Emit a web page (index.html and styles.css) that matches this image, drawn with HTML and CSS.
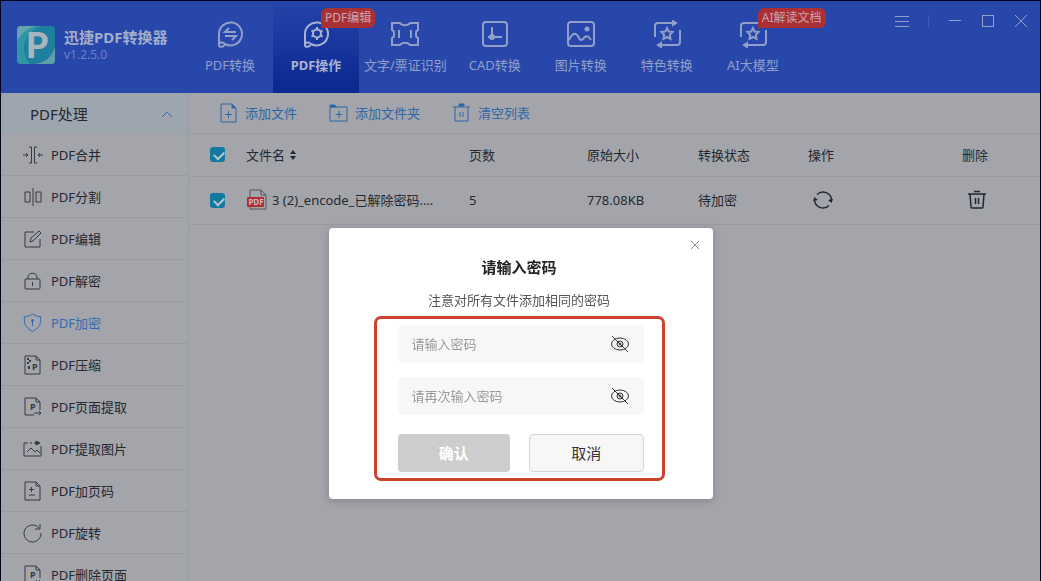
FILE: index.html
```html
<!DOCTYPE html>
<html lang="zh-CN">
<head>
    <meta charset="UTF-8">
    <meta name="viewport" content="width=device-width, initial-scale=1.0">
    <title>迅捷PDF转换器</title>
    <link rel="stylesheet" href="styles.css">
</head>
<body>
    <div class="app">
        <header class="header">
            <div class="brand">
                <svg class="logo" viewBox="0 0 38 38">
                    <rect width="38" height="38" rx="4" fill="#1f7f9e"/>
                    <path d="M0 17V4a4 4 0 0 1 4-4h16C11 2 3 8 0 17z" fill="#65a3ad"/>
                    <path d="M38 21v13a4 4 0 0 1-4 4H17c11-1 18-7 21-17z" fill="#5f9fac"/>
                    <path d="M0 17C3 8 11 2 20 0h3C13 5 7 13 7 22c0 6 2 12 6 16H4a4 4 0 0 1-4-4z" fill="#2f96a6"/>
                    <text class="logo-letter" x="20" y="32" text-anchor="middle">P</text>
                </svg>
                <div>
                    <div class="brand-name">迅捷PDF转换器</div>
                    <div class="version">v1.2.5.0</div>
                </div>
            </div>
            <nav class="nav">
                <a href="#">
                    <svg class="nav-icon" viewBox="0 0 28 28"><path d="M3 25V14a11.500 11.500 0 1 1 6 10c-1 3-6 4-6 1 0-3 3-3 5-2"/><path d="M20 12H9l4-4M9 16h11l-4 4"/></svg>
                    <span>PDF转换</span>
                </a>
                <a href="#" class="active">
                    <svg class="nav-icon" viewBox="0 0 28 28"><path d="M3 25V14a11.500 11.500 0 1 1 6 10c-1 3-6 4-6 1 0-3 3-3 5-2"/><circle cx="15" cy="13.500" r="4"/><path d="M15 7v3M15 17v3M9.400 10.300l2 1.200M18.600 15.500l2 1.200M9.400 16.700l2-1.200M18.600 11.500l2-1.200"/></svg>
                    <span>PDF操作</span>
                    <em class="badge">PDF编辑</em>
                </a>
                <a href="#">
                    <svg class="nav-icon" viewBox="0 0 28 28"><path d="M1 3h8c2 3 8 3 10 0h8v7c-2 1-2 1-2 4s0 3 2 4v7h-8c-2-3-8-3-10 0H1v-7c2-1 2-1 2-4s0-3-2-4zM8 10v8M20 10v8"/></svg>
                    <span>文字/票证识别</span>
                </a>
                <a href="#">
                    <svg class="nav-icon" viewBox="0 0 28 28"><rect x="2" y="2" width="24" height="24" rx="3"/><path d="M11 7v13M7 17h14"/><circle cx="11" cy="17" r="2" fill="currentColor"/></svg>
                    <span>CAD转换</span>
                </a>
                <a href="#">
                    <svg class="nav-icon" viewBox="0 0 28 28"><rect x="1" y="2" width="26" height="24" rx="3"/><circle cx="20" cy="9" r="1.500" fill="currentColor"/><path d="M2 20c4-8 7-8 10-2 2 4 4 1 6-1s4 0 6 3"/></svg>
                    <span>图片转换</span>
                </a>
                <a href="#">
                    <svg class="nav-icon" viewBox="0 0 28 28"><path d="M2 17V6a3 3 0 0 1 3-3h17M27 10v12a3 3 0 0 1-3 3H7"/><path d="M20 1l3 2-3 2zM8 23l-3 2 3 2z" fill="currentColor"/><path d="M14 8l1.700 3.600 3.900.5-2.800 2.800.7 4-3.500-1.900-3.500 1.900.7-4-2.800-2.800 3.900-.5z"/></svg>
                    <span>特色转换</span>
                </a>
                <a href="#">
                    <svg class="nav-icon" viewBox="0 0 28 28"><path d="M2 17V6a3 3 0 0 1 3-3h17M27 10v12a3 3 0 0 1-3 3H7"/><path d="M20 1l3 2-3 2zM8 23l-3 2 3 2z" fill="currentColor"/><path d="M14 8l1.700 3.600 3.900.5-2.800 2.800.7 4-3.500-1.900-3.500 1.900.7-4-2.800-2.800 3.900-.5z"/></svg>
                    <span>AI大模型</span>
                    <em class="badge">AI解读文档</em>
                </a>
            </nav>
            <div class="window-buttons">
                <button aria-label="菜单"><svg viewBox="0 0 14 14"><path d="M0 2.500h14M0 7.500h14M0 12.500h14"/></svg></button>
                <span class="separator"></span>
                <button aria-label="最小化"><svg viewBox="0 0 14 14"><path d="M1 6.500h12"/></svg></button>
                <button aria-label="最大化"><svg viewBox="0 0 14 14"><rect x="1.500" y="1.500" width="11" height="11"/></svg></button>
                <button aria-label="关闭"><svg viewBox="0 0 14 14"><path d="M1 1l12 12M13 1L1 13"/></svg></button>
            </div>
        </header>

        <div class="content">
            <aside class="sidebar">
                <button class="sidebar-title">
                    <span>PDF处理</span>
                    <svg class="arrow" viewBox="0 0 12 12"><path d="M1 9l5-5 5 5"/></svg>
                </button>
                <ul class="menu">
                    <li><a href="#"><svg class="icon" viewBox="0 0 20 20"><path d="M6 2h2.500v16H6M14 2h-2.500v16H14M0 10h5M3 8l2 2-2 2M20 10h-5M17 8l-2 2 2 2"/></svg>PDF合并</a></li>
                    <li><a href="#"><svg class="icon" viewBox="0 0 20 20"><path d="M10 1v18M2 5h5v10H2zM13 5h5v10h-5z"/></svg>PDF分割</a></li>
                    <li><a href="#"><svg class="icon" viewBox="0 0 20 20"><path d="M11 3H2v15h15v-8M7 13l1-4 8-7 2 2-8 8z"/></svg>PDF编辑</a></li>
                    <li><a href="#"><svg class="icon" viewBox="0 0 20 20"><rect x="2" y="8" width="15" height="10" rx="1"/><path d="M5 8V6c0-5 9-5 9 0v2M9.500 11v4"/></svg>PDF解密</a></li>
                    <li><a href="#" class="current"><svg class="icon" viewBox="0 0 20 20"><path d="M9.500 1c3 2 5 2.500 8 2.500 1 7-1 11-8 15-7-4-9-8-8-15 3 0 5-.5 8-2.500z"/><path d="M9.500 8v5"/><circle cx="9.500" cy="7.500" r="1" fill="currentColor"/></svg>PDF加密</a></li>
                    <li><a href="#"><svg class="icon" viewBox="0 0 20 20"><path d="M2 1h11l4 4v14H2zM13 1v4h4"/><path d="M4 3h2v2H4zM6 5h2v2H6zM4 7h2v2H4zM5 11h2v3H5z" fill="currentColor" stroke="none"/><text x="9" y="15">P</text></svg>PDF压缩</a></li>
                    <li><a href="#"><svg class="icon" viewBox="0 0 20 20"><path d="M11 18H2V1h11l4 4v8M13 1v4h4M11 16h7M16 14l2 2-2 2"/><text x="7" y="13">P</text></svg>PDF页面提取</a></li>
                    <li><a href="#"><svg class="icon" viewBox="0 0 20 20"><path d="M5 4H1v13h17V7M7 4h2M11 4h4M4 13l4-4 4 4 2-2 3 3"/><path d="M13 2l4 2-4 2z" fill="currentColor"/></svg>PDF提取图片</a></li>
                    <li><a href="#"><svg class="icon" viewBox="0 0 20 20"><path d="M2 1h11l4 4v14H2zM13 1v4h4M8.500 6v5M6 8.500h5M6 14h6"/></svg>PDF加页码</a></li>
                    <li><a href="#"><svg class="icon" viewBox="0 0 20 20"><path d="M16 5a8.500 8.500 0 1 0 2 5M17 1v5h-5"/></svg>PDF旋转</a></li>
                    <li><a href="#"><svg class="icon" viewBox="0 0 20 20"><path d="M11 18H2V1h11l4 4v8M13 1v4h4M13 15l4 4M17 15l-4 4"/><text x="7" y="13">P</text></svg>PDF删除页面</a></li>
                </ul>
            </aside>

            <main class="main">
                <div class="toolbar">
                    <button><svg class="icon" viewBox="0 0 20 20"><path d="M2 1h11l4 4v14H2zM9.500 8v7M6 11.500h7"/><path d="M13 1v4h4z" fill="currentColor"/></svg>添加文件</button>
                    <button><svg class="icon" viewBox="0 0 20 20"><path d="M1 18V4h17v14zM10 8v7M6.500 11.500h7"/><path d="M1 2h5l1 2H1z" fill="currentColor"/></svg>添加文件夹</button>
                    <button><svg class="icon" viewBox="0 0 20 20"><path d="M1 4h17M3 4v14h13V4M8 9v5M11 9v5"/><path d="M7 1h5v2H7z" fill="currentColor"/></svg>清空列表</button>
                </div>
                <table class="file-table">
                    <colgroup>
                        <col class="col-check">
                        <col>
                        <col class="col-pages">
                        <col class="col-size">
                        <col class="col-status">
                        <col class="col-action">
                        <col class="col-delete">
                    </colgroup>
                    <thead>
                        <tr>
                            <th><input type="checkbox" aria-label="全选" checked></th>
                            <th>文件名 <svg class="sort" viewBox="0 0 6 10"><path d="M3 0l3 4H0zM3 10l3-4H0z"/></svg></th>
                            <th>页数</th>
                            <th>原始大小</th>
                            <th>转换状态</th>
                            <th>操作</th>
                            <th>删除</th>
                        </tr>
                    </thead>
                    <tbody>
                        <tr>
                            <td><input type="checkbox" aria-label="选择文件" checked></td>
                            <td>
                                <div class="file-name">
                                    <svg class="file-icon" viewBox="0 0 22 22"><path d="M4 1h11l5 5v14H4zM15 1v5h5" fill="none" stroke="#54565e"/><rect x="1" y="8" width="17" height="10" rx="1" fill="#b02d35" stroke="none"/><text x="10" y="16" text-anchor="middle">PDF</text></svg>
                                    3 (2)_encode_已解除密码....
                                </div>
                            </td>
                            <td>5</td>
                            <td>778.08KB</td>
                            <td>待加密</td>
                            <td><button class="icon-button" aria-label="转换"><svg class="icon" viewBox="0 0 20 20"><path d="M4 4.500A8.500 8.500 0 0 1 18.500 10.500M16 15.500A8.500 8.500 0 0 1 1.500 9.500"/><path d="M0 11l1.500-4 3.500 3zM20 9l-1.500 4-3.500-3z" fill="currentColor" stroke="none"/></svg></button></td>
                            <td><button class="icon-button" aria-label="删除"><svg class="icon" viewBox="0 0 20 20"><path d="M1 4h18M7 1.500h6M3 4l1 13q0 1 1 1h10q1 0 1-1l1-13M8.500 8v6M11.500 8v6"/></svg></button></td>
                        </tr>
                    </tbody>
                </table>
            </main>
        </div>
    </div>

    <div class="overlay">
        <div class="dialog" role="dialog" aria-labelledby="dialog-title">
            <button class="close" aria-label="关闭"><svg viewBox="0 0 10 10"><path d="M1 1l8 8M9 1L1 9"/></svg></button>
            <h2 id="dialog-title">请输入密码</h2>
            <p>注意对所有文件添加相同的密码</p>
            <form class="password-form">
                <div class="field">
                    <input type="password" placeholder="请输入密码" aria-label="请输入密码">
                    <button type="button" class="eye" aria-label="显示密码"><svg viewBox="0 0 20 18"><ellipse cx="10" cy="9" rx="8.500" ry="6"/><circle cx="10" cy="9" r="3"/><circle cx="10" cy="9" r="1"/><path d="M2 1l16 16"/></svg></button>
                </div>
                <div class="field">
                    <input type="password" placeholder="请再次输入密码" aria-label="请再次输入密码">
                    <button type="button" class="eye" aria-label="显示密码"><svg viewBox="0 0 20 18"><ellipse cx="10" cy="9" rx="8.500" ry="6"/><circle cx="10" cy="9" r="3"/><circle cx="10" cy="9" r="1"/><path d="M2 1l16 16"/></svg></button>
                </div>
                <div class="form-buttons">
                    <button type="submit" class="confirm" disabled>确认</button>
                    <button type="button" class="cancel">取消</button>
                </div>
            </form>
        </div>
    </div>
</body>
</html>
```

FILE: styles.css
```css
* {
    box-sizing: border-box;
}
body {
    margin: 0;
    font-family: "Noto Sans", "Noto Sans CJK SC", sans-serif;
    font-size: 13px;
    line-height: 20px;
    color: #252831;
}
button {
    padding: 0;
    border: none;
    background: none;
    font: inherit;
    color: inherit;
}
a {
    color: inherit;
    text-decoration: none;
}
svg {
    fill: none;
    stroke: currentColor;
    display: block;
    flex-shrink: 0;
}
.app {
    display: flex;
    flex-direction: column;
    height: 100vh;
    overflow: hidden;
    background: #a4a5aa;
    border: 1px solid #05061c;
    border-bottom: none;
}

/* header */
.header {
    display: flex;
    flex-shrink: 0;
    height: 92px;
    background: #2747ab;
    color: #929fc9;
}
.brand {
    display: flex;
    align-items: center;
    gap: 9px;
    width: 186px;
    padding: 0 0 4px 16px;
}
.logo {
    width: 38px;
    height: 38px;
    overflow: visible;
    stroke: none;
}
.logo-letter {
    font-family: Lato, sans-serif;
    font-size: 36px;
    line-height: 36px;
    font-weight: 900;
    fill: #a9b4bd;
}
.brand-name {
    font-size: 15px;
    font-weight: bold;
    color: #a3adcb;
    white-space: nowrap;
}
.version {
    font-size: 12px;
    line-height: 16px;
    color: #6c82c4;
}
.nav {
    display: flex;
}
.nav a {
    position: relative;
    display: flex;
    flex-direction: column;
    align-items: center;
    gap: 7px;
    min-width: 86px;
    padding: 19px 5px 0;
    white-space: nowrap;
}
.nav .active {
    background: linear-gradient(#2444aa, #0b2790);
    color: #a9b2d0;
    font-weight: bold;
}
.nav-icon {
    width: 28px;
    height: 28px;
    stroke-width: 2;
}
.badge {
    position: absolute;
    top: 7px;
    left: 48px;
    height: 20px;
    padding: 0 4px;
    border-radius: 6px 6px 6px 0;
    background: #ab3036;
    color: #c9a5ad;
    font-size: 12px;
    font-style: normal;
    font-weight: normal;
}
.window-buttons {
    display: flex;
    align-items: center;
    gap: 19px;
    height: 14px;
    margin: 13px 12px 0 auto;
}
.window-buttons svg {
    width: 14px;
    height: 14px;
}
.separator {
    width: 1px;
    height: 12px;
    background: #405bb3;
}

/* sidebar */
.content {
    display: flex;
    flex: 1;
    min-height: 0;
}
.sidebar {
    width: 188px;
    overflow: hidden;
    flex-shrink: 0;
    border-right: 1px solid #999ba2;
}
.sidebar-title {
    display: flex;
    align-items: center;
    justify-content: space-between;
    width: 100%;
    height: 41px;
    padding: 0 15px 0 29px;
    background: #9da5ae;
    font-size: 15px;
}
.arrow {
    width: 12px;
    height: 12px;
    color: #326ba8;
}
.menu {
    margin: 0;
    padding: 0;
    list-style: none;
}
.menu a {
    display: flex;
    align-items: center;
    gap: 8px;
    height: 42px;
    padding-left: 22px;
    border-bottom: 1px solid #999ba1;
}
.menu .current {
    color: #336bb0;
}
.icon {
    width: 20px;
    height: 20px;
}
.icon text {
    font-size: 9px;
    font-weight: bold;
    fill: currentColor;
    stroke: none;
}
.menu .icon {
    color: #363941;
}
.menu .current .icon {
    color: #336bb0;
}

/* file list */
.main {
    flex: 1;
    min-width: 0;
}
.toolbar {
    display: flex;
    gap: 32px;
    height: 41px;
    padding-left: 30px;
    border-bottom: 1px solid #999ba1;
    color: #2c67a7;
}
.toolbar button {
    display: flex;
    align-items: center;
    gap: 6px;
}
.file-table {
    width: 100%;
    table-layout: fixed;
    border-collapse: collapse;
}
.file-table th,
.file-table td {
    height: 42px;
    padding: 0;
    border-bottom: 1px solid #999ba1;
    text-align: left;
    font-weight: normal;
    white-space: nowrap;
}
.file-table td {
    height: 48px;
}
.col-check {
    width: 57px;
}
.col-pages {
    width: 118px;
}
.col-size {
    width: 111px;
}
.col-status {
    width: 110px;
}
.col-action {
    width: 154px;
}
.col-delete {
    width: 78px;
}
input[type="checkbox"] {
    appearance: none;
    display: block;
    width: 15px;
    height: 15px;
    margin: 0 0 0 21px;
    border-radius: 3px;
    background: #14799f;
}
input[type="checkbox"]:checked::before {
    content: "";
    display: block;
    width: 8px;
    height: 5px;
    margin: 4px 0 0 4px;
    border: solid #b5c6cf;
    border-width: 0 0 2px 2px;
    transform: rotate(-45deg);
}
.sort {
    display: inline-block;
    width: 6px;
    height: 10px;
    margin-left: 2px;
    fill: currentColor;
    stroke: none;
}
.file-name {
    display: flex;
    align-items: center;
    gap: 4px;
}
.file-icon {
    width: 22px;
    height: 22px;
}
.file-icon text {
    font-size: 8px;
    font-weight: bold;
    fill: #d0b9bd;
    stroke: none;
}
.icon-button {
    display: block;
    margin-left: 5px;
}
.icon-button .icon {
    stroke-width: 1.5;
}

/* password dialog */
.overlay {
    position: fixed;
    inset: 0;
    display: flex;
    justify-content: center;
    align-items: flex-start;
    padding-top: 228px;
}
.dialog {
    position: relative;
    width: 384px;
    padding: 29px 48px 18px 45px;
    border-radius: 4px;
    background: #fff;
    box-shadow: 0 2px 8px rgba(0, 0, 0, 0.2);
    text-align: center;
}
.dialog h2 {
    margin: 0 0 13px;
    font-size: 15px;
    line-height: 20px;
    color: #222;
}
.dialog p {
    margin: 0 0 6px;
    color: #555;
}
.close {
    position: absolute;
    top: 12px;
    right: 13px;
    color: #888;
}
.close svg {
    width: 10px;
    height: 10px;
}
.password-form {
    display: flex;
    flex-direction: column;
    gap: 14px;
    padding: 6px 18px 6px 21px;
    border: 3px solid #cb432f;
    border-radius: 7px;
}
.field {
    display: flex;
    align-items: center;
    height: 38px;
    padding: 0 14px;
    border-radius: 4px;
    background: #f7f7f7;
}
.field input {
    flex: 1;
    min-width: 0;
    padding: 0;
    border: none;
    outline: none;
    background: none;
    font: inherit;
}
.field input::placeholder {
    color: #999;
}
.eye {
    color: #333;
}
.eye svg {
    width: 20px;
    height: 18px;
}
.form-buttons {
    display: flex;
    gap: 19px;
    margin-top: 5px;
}
.form-buttons button {
    flex: 1;
    height: 38px;
    border-radius: 4px;
    font-size: 15px;
}
.form-buttons .confirm {
    background: #cdcdcd;
    color: #fff;
    font-weight: bold;
}
.form-buttons .cancel {
    border: 1px solid #d5d5d5;
    background: #f7f7f7;
    color: #333;
}
```
